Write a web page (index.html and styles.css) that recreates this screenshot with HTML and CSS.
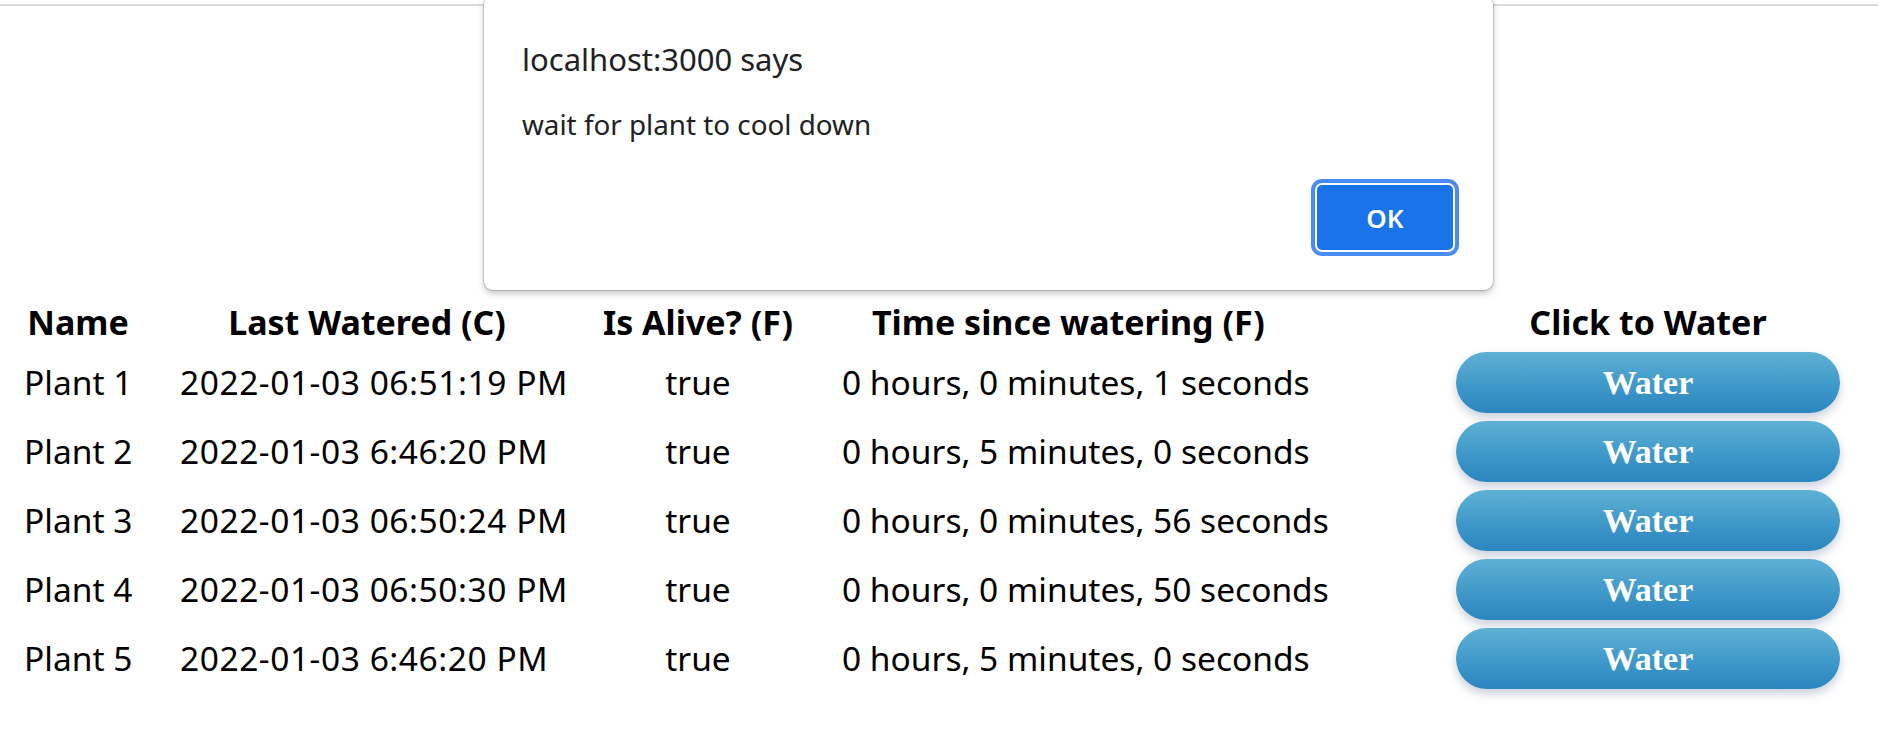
FILE: index.html
```html
<!DOCTYPE html>
<html lang="en">
<head>
<meta charset="utf-8">
<title>Plants</title>
<link rel="stylesheet" href="styles.css">
</head>
<body>
<div class="topline"></div>
<div class="plants">
  <div class="row head">
    <div class="th">Name</div>
    <div class="th">Last Watered (C)</div>
    <div class="th">Is Alive? (F)</div>
    <div class="th th-time">Time since watering (F)</div>
    <div class="th">Click to Water</div>
  </div>
  <div class="row">
    <div class="td">Plant 1</div>
    <div class="td td-date">2022-01-03 06:51:19 PM</div>
    <div class="td td-alive">true</div>
    <div class="td">0 hours, 0 minutes, 1 seconds</div>
    <button class="water">Water</button>
  </div>
  <div class="row">
    <div class="td">Plant 2</div>
    <div class="td td-date">2022-01-03 6:46:20 PM</div>
    <div class="td td-alive">true</div>
    <div class="td">0 hours, 5 minutes, 0 seconds</div>
    <button class="water">Water</button>
  </div>
  <div class="row">
    <div class="td">Plant 3</div>
    <div class="td td-date">2022-01-03 06:50:24 PM</div>
    <div class="td td-alive">true</div>
    <div class="td">0 hours, 0 minutes, 56 seconds</div>
    <button class="water">Water</button>
  </div>
  <div class="row">
    <div class="td">Plant 4</div>
    <div class="td td-date">2022-01-03 06:50:30 PM</div>
    <div class="td td-alive">true</div>
    <div class="td">0 hours, 0 minutes, 50 seconds</div>
    <button class="water">Water</button>
  </div>
  <div class="row">
    <div class="td">Plant 5</div>
    <div class="td td-date">2022-01-03 6:46:20 PM</div>
    <div class="td td-alive">true</div>
    <div class="td">0 hours, 5 minutes, 0 seconds</div>
    <button class="water">Water</button>
  </div>
</div>

<div class="dialog" role="alertdialog">
  <div class="dialog-title">localhost:3000 says</div>
  <div class="dialog-msg">wait for plant to cool down</div>
  <div class="dialog-actions">
    <button class="ok">OK</button>
  </div>
</div>
</body>
</html>
```

FILE: styles.css
```css
html, body {
  margin: 0;
  padding: 0;
  background: #ffffff;
}

body {
  font-family: "Noto Sans", "Open Sans", sans-serif;
  color: #000;
  position: relative;
  width: 1878px;
  height: 744px;
  overflow: hidden;
}

.topline {
  margin-top: 4px;
  height: 2px;
  background: #dadada;
}

.plants {
  margin-top: 294px;
  padding-left: 24px;
  display: flex;
  flex-direction: column;
  gap: 8px;
}

.row {
  display: grid;
  grid-template-columns: 108px 374px 192px 566px 384px;
  column-gap: 48px;
  align-items: center;
  height: 61px;
  font-size: 33.5px;
  line-height: 61px;
  white-space: nowrap;
}

.row.head {
  height: 44px;
  line-height: 44px;
  font-size: 34px;
}

.th {
  font-weight: 700;
  text-align: center;
}

.th-time {
  text-align: left;
  padding-left: 30px;
}

.td {
  text-align: left;
}

.td-date {
  letter-spacing: 0.55px;
}

.td-alive {
  text-align: center;
}

.water {
  width: 384px;
  height: 61px;
  border: none;
  border-radius: 31px;
  background: linear-gradient(to bottom, #5eb1d4 0%, #3f98c9 55%, #2c86bf 100%);
  box-shadow: 0 5px 10px rgba(70, 90, 130, 0.28);
  color: #ffffff;
  font-family: "Liberation Serif", "Times New Roman", serif;
  font-weight: 700;
  font-size: 34px;
  line-height: 61px;
  padding: 0;
}

.dialog {
  position: absolute;
  left: 484px;
  top: -4px;
  width: 1009px;
  height: 294px;
  box-sizing: border-box;
  background: #ffffff;
  border-radius: 9px;
  box-shadow: 0 0 0 1px rgba(0, 0, 0, 0.14), 0 3px 7px rgba(0, 0, 0, 0.25);
  padding: 43px 38px 0 38px;
  display: flex;
  flex-direction: column;
  color: #202124;
}

.dialog-title {
  font-size: 31px;
  line-height: 40px;
}

.dialog-msg {
  margin-top: 27px;
  font-size: 27.8px;
  line-height: 36px;
}

.dialog-actions {
  margin-top: 41px;
  display: flex;
  justify-content: flex-end;
}

.ok {
  width: 140px;
  height: 69px;
  box-sizing: border-box;
  border: 2px solid #ffffff;
  border-radius: 7px;
  background: #1a73e8;
  box-shadow: 0 0 0 4px #4a8cf5;
  color: #ffffff;
  font-family: "Noto Sans", "Open Sans", sans-serif;
  font-weight: 600;
  font-size: 26px;
  padding: 0;
}
```
